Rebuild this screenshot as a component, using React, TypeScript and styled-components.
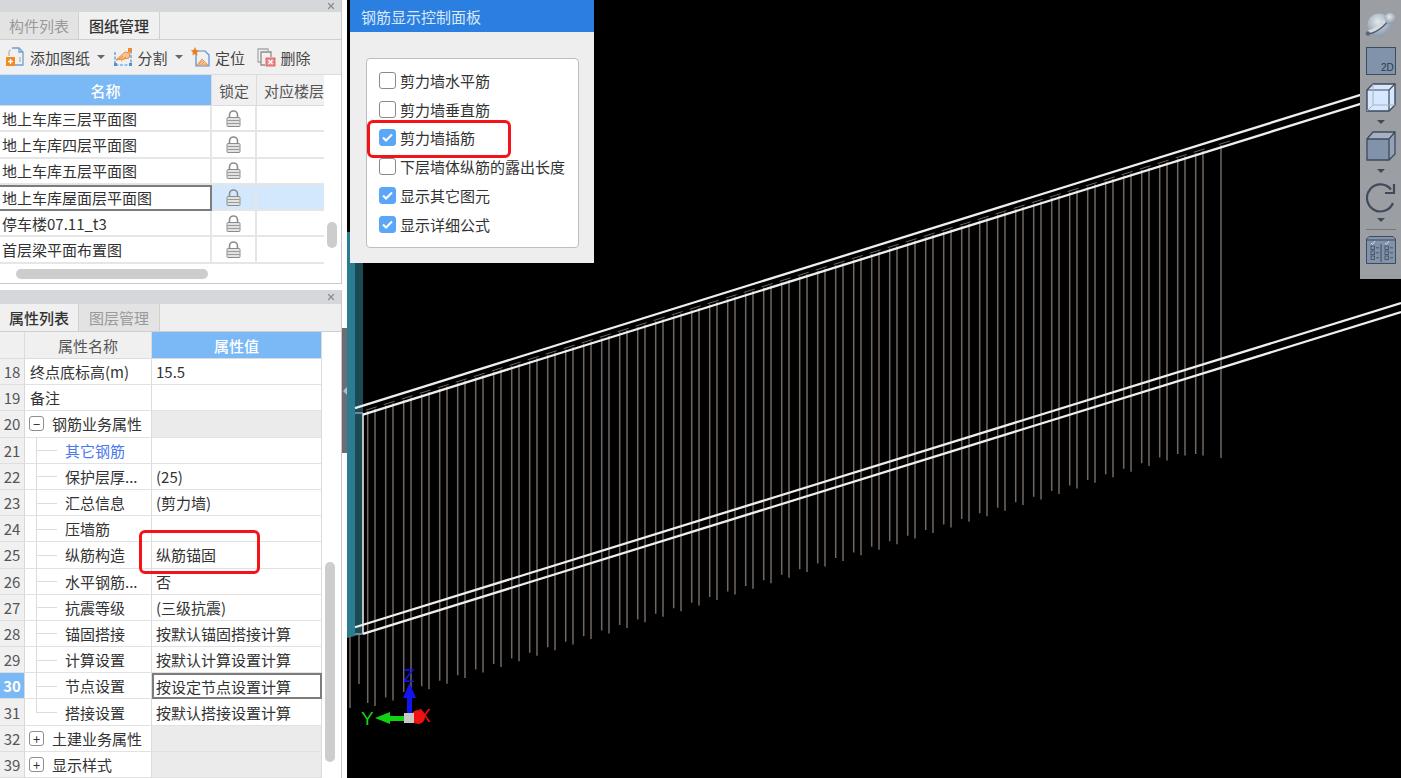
import styled, { createGlobalStyle } from 'styled-components';
import { X } from 'lucide-react';

const GlobalStyle = createGlobalStyle`
  html, body {
    margin: 0;
    height: 100%;
    overflow: hidden;
    background: #000;
    font-family: "Noto Sans CJK SC", "Liberation Sans", sans-serif;
    font-size: 15px;
    color: #333;
  }
`;

const Page = styled.div`
  display: flex;
  width: 1401px;
  height: 778px;
`;

const Sidebar = styled.aside`
  position: relative;
  display: flex;
  flex-direction: column;
  gap: 6px;
  width: 347px;
  height: 778px;
  background: #fff;
  flex-shrink: 0;
`;

const Panel = styled.section<{ $grow?: boolean }>`
  display: flex;
  flex-direction: column;
  width: 342px;
  box-sizing: border-box;
  border-right: 1px solid #c9c9c9;
  overflow: hidden;
  ${(p) => (p.$grow ? 'flex: 1;' : 'height: 284px; border-bottom: 1px solid #c9c9c9;')}
`;

const PanelBand = styled.div<{ $height: number }>`
  display: flex;
  align-items: center;
  justify-content: flex-end;
  height: ${(p) => p.$height}px;
  padding-right: 5px;
  background: #d6d7da;
  color: #8b8c90;
  flex-shrink: 0;
`;

const TabRow = styled.div`
  display: flex;
  height: 28px;
  background: #efefef;
  border-bottom: 1px solid #cfcfcf;
  box-sizing: border-box;
  flex-shrink: 0;
`;

const Tab = styled.div<{ $active?: boolean; $width: number }>`
  display: flex;
  align-items: center;
  justify-content: center;
  width: ${(p) => p.$width}px;
  box-sizing: border-box;
  border-right: 1px solid #d0d0d0;
  background: ${(p) => (p.$active ? '#f0f0f0' : '#e3e3e3')};
  color: ${(p) => (p.$active ? '#333' : '#9a9a9a')};
  font-weight: ${(p) => (p.$active ? 500 : 400)};
`;

const Toolbar = styled.div`
  display: flex;
  align-items: center;
  gap: 7.5px;
  height: 35px;
  padding-left: 5px;
  background: #f0f0f0;
  border-bottom: 1px solid #dcdcdc;
  box-sizing: border-box;
  flex-shrink: 0;
`;

const ToolButton = styled.div<{ $offset?: number }>`
  display: flex;
  align-items: center;
  gap: 5px;
  margin-left: ${(p) => p.$offset ?? 0}px;
  color: #444;
`;

const Caret = styled.span<{ $color?: string; $top?: number }>`
  display: block;
  width: 0;
  height: 0;
  margin-top: ${(p) => p.$top ?? 0}px;
  border-left: 4px solid transparent;
  border-right: 4px solid transparent;
  border-top: 4px solid ${(p) => p.$color ?? '#666'};
  flex-shrink: 0;
`;

const ToolCaret = styled(Caret)`
  margin-left: 2px;
`;

const TableArea = styled.div`
  display: flex;
`;

const DrawingGrid = styled.div`
  display: grid;
  grid-template-columns: 212px 45px 67px;
  grid-auto-rows: 26.3px;
  grid-template-rows: 31px;
  width: 324px;
`;

const HeaderCell = styled.div<{ $accent?: boolean; $clip?: boolean }>`
  display: flex;
  align-items: center;
  justify-content: ${(p) => (p.$clip ? 'flex-start' : 'center')};
  box-sizing: border-box;
  padding-left: ${(p) => (p.$clip ? 7 : 0)}px;
  border-right: ${(p) => (p.$clip ? 'none' : '1px solid #dcdcdc')};
  border-bottom: 1px solid #dcdcdc;
  background: ${(p) => (p.$accent ? '#7ab8f6' : '#f0f0f0')};
  color: ${(p) => (p.$accent ? '#fff' : '#555')};
  font-weight: ${(p) => (p.$accent ? 500 : 400)};
  white-space: nowrap;
  overflow: hidden;
`;

const DrawingCell = styled.div<{ $selected?: boolean; $focus?: boolean; $center?: boolean; $edge?: boolean }>`
  display: flex;
  align-items: center;
  justify-content: ${(p) => (p.$center ? 'center' : 'flex-start')};
  box-sizing: border-box;
  padding-left: ${(p) => (p.$center ? 0 : 2)}px;
  background: ${(p) => (p.$selected && !p.$focus ? '#d3e8fd' : '#fff')};
  border-right: ${(p) => (p.$edge ? 'none' : '2px solid #e6e6e6')};
  border-bottom: 2px solid #e6e6e6;
  white-space: nowrap;
  ${(p) => p.$focus && 'border: 2px solid #7c7c7c; border-left: none; padding-bottom: 2px;'}
`;

const VTrack = styled.div`
  flex: 1;
`;

const VThumb = styled.div<{ $top: number; $height: number }>`
  width: 10px;
  height: ${(p) => p.$height}px;
  margin: ${(p) => p.$top}px 0 0 3px;
  border-radius: 5px;
  background: #cdcdcd;
`;

const HThumb = styled.div`
  width: 192px;
  height: 10px;
  margin: 5px 0 0 16px;
  border-radius: 5px;
  background: #cdcdcd;
`;

const PropertyGrid = styled.div`
  display: grid;
  grid-template-columns: 25px 127px 170px;
  grid-auto-rows: 26.2px;
  grid-template-rows: 27px;
  width: 322px;
`;

const IndexCell = styled.div<{ $active?: boolean }>`
  display: flex;
  align-items: center;
  justify-content: center;
  box-sizing: border-box;
  border-right: 1px solid #d8d8d8;
  border-bottom: 1px solid #dedede;
  background: ${(p) => (p.$active ? '#7ab8f6' : '#f0f0f0')};
  color: ${(p) => (p.$active ? '#fff' : '#555')};
  font-weight: ${(p) => (p.$active ? 700 : 400)};
`;

const NameCell = styled.div<{ $indent: number; $link?: boolean }>`
  position: relative;
  display: flex;
  align-items: center;
  box-sizing: border-box;
  padding-left: ${(p) => p.$indent}px;
  border-right: 1px solid #dcdcdc;
  border-bottom: 1px solid #e2e2e2;
  background: #fff;
  color: ${(p) => (p.$link ? '#4a78ee' : '#333')};
  white-space: nowrap;
`;

const TreeNameCell = styled(NameCell)<{ $last?: boolean }>`
  &::before {
    content: '';
    position: absolute;
    left: 11px;
    top: 50%;
    width: 21px;
    height: 1px;
    background: #dcdcdc;
  }
  &::after {
    content: '';
    position: absolute;
    left: 11px;
    top: 0;
    width: 1px;
    height: ${(p) => (p.$last ? '50%' : '100%')};
    background: #dcdcdc;
  }
`;

const ValueCell = styled.div<{ $group?: boolean; $focus?: boolean }>`
  display: flex;
  align-items: center;
  box-sizing: border-box;
  padding-left: 4px;
  border-right: 1px solid #dcdcdc;
  border-bottom: 1px solid #e2e2e2;
  background: ${(p) => (p.$group ? '#ebebeb' : '#fff')};
  white-space: nowrap;
  ${(p) => p.$focus && 'border: 2px solid #7c7c7c; padding-left: 2px;'}
`;

const Expander = styled.span`
  position: absolute;
  left: 4px;
  top: 5px;
  display: flex;
  align-items: center;
  justify-content: center;
  width: 15px;
  height: 15px;
  box-sizing: border-box;
  border: 1px solid #8f8f8f;
  border-radius: 3px;
  background: #fff;
  color: #333;
  font-size: 13px;
  line-height: 1;
`;

const Splitter = styled.div`
  position: absolute;
  left: 342px;
  top: 328px;
  display: flex;
  align-items: center;
  justify-content: center;
  width: 5px;
  height: 125px;
  background: #6a6d72;
  &::after {
    content: '';
    border-top: 4px solid transparent;
    border-bottom: 4px solid transparent;
    border-right: 4px solid #b9bcc0;
  }
`;

const Highlight = styled.div<{ $left: number; $top: number; $width: number; $height: number }>`
  position: absolute;
  left: ${(p) => p.$left}px;
  top: ${(p) => p.$top}px;
  width: ${(p) => p.$width}px;
  height: ${(p) => p.$height}px;
  box-sizing: border-box;
  border: 3px solid #f5131a;
  border-radius: 6px;
  pointer-events: none;
`;

const Viewport = styled.main`
  position: relative;
  flex: 1;
  height: 778px;
  background: #000;
  overflow: hidden;
`;

const SceneSvg = styled.svg`
  position: absolute;
  inset: 0;
  width: 100%;
  height: 100%;
`;

const FloatPanel = styled.div`
  position: absolute;
  left: 3px;
  top: 0;
  width: 244px;
  height: 263px;
  background: #eeeeee;
`;

const FloatTitle = styled.div`
  display: flex;
  align-items: center;
  height: 32px;
  padding-left: 11px;
  background: #2b7fe0;
  color: #d9e9fb;
`;

const OptionBox = styled.div`
  display: flex;
  flex-direction: column;
  box-sizing: border-box;
  width: 213px;
  height: 190px;
  margin: 26px 0 0 16px;
  padding: 7px 0 0 12px;
  background: #fff;
  border: 1px solid #bdbdbd;
  border-radius: 4px;
`;

const OptionRow = styled.label`
  display: flex;
  align-items: center;
  gap: 4px;
  height: 28.8px;
  flex-shrink: 0;
  white-space: nowrap;
`;

const CheckBox = styled.span<{ $checked?: boolean }>`
  display: flex;
  align-items: center;
  justify-content: center;
  width: 17px;
  height: 17px;
  box-sizing: border-box;
  border-radius: 3px;
  border: 1px solid ${(p) => (p.$checked ? '#5ba6f6' : '#8a8a8a')};
  background: ${(p) => (p.$checked ? '#5ba6f6' : '#fff')};
`;

const Rail = styled.div`
  position: absolute;
  right: 0;
  top: 0;
  display: flex;
  flex-direction: column;
  align-items: center;
  box-sizing: border-box;
  width: 41px;
  height: 279px;
  padding-top: 12px;
  background: #9b9ea3;
`;

const RailIcon = styled.svg<{ $top?: number }>`
  display: block;
  margin-top: ${(p) => p.$top ?? 0}px;
  flex-shrink: 0;
`;

const RailDivider = styled.div`
  width: 30px;
  height: 1px;
  margin-top: 7px;
  background: #7a7674;
  flex-shrink: 0;
`;

const RAIL_LINE = '#3f4a5a';
const RAIL_FILL = '#8093ab';
const BAR_COLOR = '#726861';

const AddIcon = () => (
  <svg width="20" height="20" viewBox="0 0 20 20" fill="none">
    <path d="M7 1h7l4 4v13H10" stroke="#6f9fd4" strokeWidth="1.3" />
    <path d="M14 1v4h4" stroke="#6f9fd4" strokeWidth="1.3" />
    <path d="M4 9V5a2 2 0 0 1 2-2M15 15v-5" stroke="#b0b0b0" strokeWidth="1.2" />
    <rect x="1" y="10" width="9" height="9" fill="#f08a24" />
    <path d="M5.500 12v5M3 14.500h5" stroke="#fff" strokeWidth="1.4" />
  </svg>
);

const SplitIcon = () => (
  <svg width="20" height="20" viewBox="0 0 20 20" fill="none">
    <path d="M2 5v13h16V5" stroke="#4d8fd8" strokeWidth="1.2" strokeDasharray="3 1.500" />
    <path d="M3 13l9-8 5 1-1 5-6 1z" fill="#f5c49a" stroke="#ee8a34" strokeWidth="1" />
    <path d="M6 12l4-3M8 14l5-4" stroke="#ee8a34" strokeWidth="1" />
    <rect x="15" y="1" width="4" height="4" fill="#ee8a34" />
    <rect x="1" y="16" width="3" height="3" fill="#4d8fd8" />
    <rect x="16" y="16" width="3" height="3" fill="#4d8fd8" />
  </svg>
);

const LocateIcon = () => (
  <svg width="20" height="20" viewBox="0 0 20 20" fill="none">
    <path d="M6 6v13h13V8l-4-4H8" stroke="#4d8fd8" strokeWidth="1.2" />
    <path d="M7 18l5-6 6 6z" fill="#f5c49a" stroke="#ee8a34" strokeWidth="0.8" />
    <path d="M9 17l3-3M12 17l2-2" stroke="#ee8a34" strokeWidth="0.8" />
    <path d="M5 0l1.300 3 3 .4-2.300 2 .6 3L5 7 2.400 8.400l.6-3-2.300-2 3-.4z" fill="#ee7d1e" />
  </svg>
);

const DeleteIcon = () => (
  <svg width="20" height="20" viewBox="0 0 20 20" fill="none">
    <path d="M5 15H2V2h10v2" stroke="#a8a8a8" strokeWidth="1.3" />
    <path d="M9 18H5V5h10v5" stroke="#8d8d8d" strokeWidth="1.3" />
    <rect x="10" y="11" width="9" height="8" fill="#ee8c8c" stroke="#d95050" strokeWidth="0.8" />
    <path d="M12.500 13l4 4M16.500 13l-4 4" stroke="#fff" strokeWidth="1.3" />
  </svg>
);

const LockIcon = () => (
  <svg width="15" height="17" viewBox="0 0 15 17" fill="none">
    <path d="M3.500 8V5a4 4 0 0 1 8 0v3" stroke="#8c8c8c" strokeWidth="1.6" />
    <rect x="1" y="7.500" width="13" height="9" rx="1" fill="#e2e2e2" stroke="#8c8c8c" />
    <path d="M1.500 10.500h12M1.500 13.500h12" stroke="#9a9a9a" />
  </svg>
);

const CheckMark = () => (
  <svg width="11" height="9" viewBox="0 0 11 9" fill="none">
    <path d="M1 4.500l3 3 6-6" stroke="#fff" strokeWidth="2" />
  </svg>
);

// beams run along these slopes, all values are page pixels
const upperBeam = (x: number) => 176 - 0.3115 * (x - 1100);
const lowerBeam = (x: number) => 303 - 0.31 * (x - 1401);

type Bar = { x: number; bottom: number };

const bars: Bar[] = [];
for (let n = 0; n <= 47; n++) {
  const a = 367.7 + 18 * n;
  const b = 375 + 18 * n;
  if (n < 47) bars.push({ x: a, bottom: Math.max(703 - 0.31 * (a - 368), 454) });
  bars.push({ x: b, bottom: n === 47 ? 458 : Math.max(706 - 0.31 * (b - 375), 455.500) });
}

const Scene = () => (
  <SceneSvg viewBox="347 0 1054 778">
    <polygon points="347,232 355,232 355,636 347,638" fill="#2a7c90" />
    <polygon points="355,232 363,232 363,634 355,636" fill="#1b4a55" />
    <line x1="350" y1="636" x2="350" y2="708" stroke={BAR_COLOR} strokeWidth="1.500" />
    <line x1="359" y1="634" x2="359" y2="684" stroke={BAR_COLOR} strokeWidth="1.500" />
    {bars.map((bar) => (
      <line
        key={bar.x}
        x1={bar.x}
        y1={upperBeam(bar.x) + 7}
        x2={bar.x}
        y2={bar.bottom}
        stroke={BAR_COLOR}
        strokeWidth="1.500"
      />
    ))}
    {bars
      .filter((_, i) => i % 2 === 0)
      .map((bar) => (
        <line
          key={bar.x}
          x1={bar.x - 2}
          y1={upperBeam(bar.x - 2) + 5.500}
          x2={bar.x + 9}
          y2={upperBeam(bar.x + 9) + 5.500}
          stroke="#6f6662"
          strokeWidth="1"
        />
      ))}
    <line x1="363" y1="413" x2="363" y2="634" stroke="#e6e6e6" strokeWidth="1.600" />
    <line x1="355" y1="413" x2="363" y2="413" stroke="#8fa6ac" strokeWidth="1.400" />
    <line x1="355" y1="634" x2="363" y2="634" stroke="#8fa6ac" strokeWidth="1.400" />
    <line x1="355" y1={upperBeam(355)} x2="1401" y2={upperBeam(1401)} stroke="#eeeeee" strokeWidth="2.300" />
    <line x1="363" y1={upperBeam(363) + 9} x2="1401" y2={upperBeam(1401) + 9} stroke="#eeeeee" strokeWidth="2.300" />
    <line x1="355" y1={lowerBeam(355)} x2="1401" y2={lowerBeam(1401)} stroke="#eeeeee" strokeWidth="2.300" />
    <line x1="363" y1={lowerBeam(363) + 9} x2="1401" y2={lowerBeam(1401) + 9} stroke="#eeeeee" strokeWidth="2.300" />

    <rect x="407" y="694" width="5" height="20" fill="#1414f0" />
    <polygon points="409.500,683 416,698 403,698" fill="#1414f0" />
    <rect x="384" y="716" width="22" height="5" fill="#11d411" />
    <polygon points="375,718 390,712 390,724" fill="#11d411" />
    <circle cx="418" cy="717" r="7" fill="#f01212" />
    <rect x="404" y="713" width="10" height="10" fill="#c9c9c9" />
    <text x="403" y="682" fill="#1414f0" fontFamily="Liberation Sans" fontSize="19">Z</text>
    <text x="361" y="725" fill="#11d411" fontFamily="Liberation Sans" fontSize="19">Y</text>
    <text x="418" y="722" fill="#f01212" fontFamily="Liberation Sans" fontSize="19">X</text>
  </SceneSvg>
);

const SphereIcon = () => (
  <RailIcon width="31" height="25" viewBox="0 0 31 25">
    <defs>
      <radialGradient id="ball" cx="0.450" cy="0.350" r="0.800">
        <stop offset="0" stopColor="#e4e8ec" />
        <stop offset="1" stopColor="#76879d" />
      </radialGradient>
    </defs>
    <circle cx="14" cy="13" r="11.500" fill="url(#ball)" />
    <path d="M3 20C9 19 17 13 22 6" fill="none" stroke="#d5dae0" strokeWidth="3" />
    <path d="M2 22C9 22 20 15 24 7" fill="none" stroke="#4a5666" strokeWidth="1.300" />
    <circle cx="25" cy="6.500" r="5.500" fill="url(#ball)" />
    <circle cx="3" cy="21.500" r="2.200" fill="#5a6676" />
  </RailIcon>
);

const Flat2dIcon = () => (
  <RailIcon $top={10} width="30" height="28" viewBox="0 0 30 28">
    <rect x="0.500" y="0.500" width="29" height="27" fill={RAIL_FILL} stroke={RAIL_LINE} />
    <text x="15" y="24" fill="#2f3a48" fontFamily="Liberation Sans" fontSize="10">2D</text>
  </RailIcon>
);

const GlassCubeIcon = () => (
  <RailIcon $top={8} width="30" height="29" viewBox="0 0 30 29">
    <path d="M1 7L7 1H29V22L23 28H1Z" fill="#d6e8ff" stroke={RAIL_LINE} strokeWidth="1.400" />
    <path d="M1 7H23V28M23 7L29 1" fill="none" stroke={RAIL_LINE} strokeWidth="1.200" />
    <path d="M7 1V22H29M7 22L1 28" fill="none" stroke="#a3b0c2" strokeWidth="1" />
  </RailIcon>
);

const SolidCubeIcon = () => (
  <RailIcon $top={7} width="30" height="30" viewBox="0 0 30 30">
    <path d="M1 8L7 1H29L23 8Z" fill="#a4b1c3" />
    <path d="M23 8L29 1V23L23 29Z" fill="#93a2b7" />
    <rect x="1" y="8" width="22" height="21" fill={RAIL_FILL} />
    <path d="M1 8L7 1H29V23L23 29H1ZM1 8H23V29M23 8L29 1" fill="none" stroke={RAIL_LINE} strokeWidth="1.300" />
  </RailIcon>
);

const RotateIcon = () => (
  <RailIcon $top={9} width="30" height="31" viewBox="0 0 30 31" fill="none">
    <path d="M27 21A13.500 13.500 0 1 1 25 7.500" stroke={RAIL_LINE} strokeWidth="2.200" />
    <path d="M28 2V11H19" stroke={RAIL_LINE} strokeWidth="2.200" />
  </RailIcon>
);

const ChecklistIcon = () => (
  <RailIcon $top={6} width="30" height="28" viewBox="0 0 30 28" fill="none">
    <path d="M0.500 3L3 0.500H27L29.500 3V27.500H0.500Z" fill={RAIL_FILL} stroke={RAIL_LINE} />
    <path d="M1 4H29M15 8V26" stroke={RAIL_LINE} />
    <path d="M5 7l1.500 1.500L9 5M19 7l1.500 1.500L23 5" stroke="#e8edf3" strokeWidth="0.800" />
    {[5, 19].map((x) =>
      [10, 15, 20].map((y) => (
        <g key={`${x}-${y}`}>
          <rect x={x} y={y} width="3.500" height="3.500" stroke={RAIL_LINE} strokeWidth="0.800" />
          <path d={`M${x + 5} ${y + 1.800}h3`} stroke={RAIL_LINE} strokeWidth="0.800" />
        </g>
      )),
    )}
  </RailIcon>
);

const drawings = [
  { name: '地上车库三层平面图' },
  { name: '地上车库四层平面图' },
  { name: '地上车库五层平面图' },
  { name: '地上车库屋面层平面图', selected: true },
  { name: '停车楼07.11_t3' },
  { name: '首层梁平面布置图' },
];

type Prop = {
  n: number;
  name: string;
  value?: string;
  kind: 'plain' | 'group' | 'child';
  open?: boolean;
  link?: boolean;
  last?: boolean;
  active?: boolean;
};

const properties: Prop[] = [
  { n: 18, name: '终点底标高(m)', value: '15.5', kind: 'plain' },
  { n: 19, name: '备注', kind: 'plain' },
  { n: 20, name: '钢筋业务属性', kind: 'group', open: true },
  { n: 21, name: '其它钢筋', kind: 'child', link: true },
  { n: 22, name: '保护层厚...', value: '(25)', kind: 'child' },
  { n: 23, name: '汇总信息', value: '(剪力墙)', kind: 'child' },
  { n: 24, name: '压墙筋', kind: 'child' },
  { n: 25, name: '纵筋构造', value: '纵筋锚固', kind: 'child' },
  { n: 26, name: '水平钢筋...', value: '否', kind: 'child' },
  { n: 27, name: '抗震等级', value: '(三级抗震)', kind: 'child' },
  { n: 28, name: '锚固搭接', value: '按默认锚固搭接计算', kind: 'child' },
  { n: 29, name: '计算设置', value: '按默认计算设置计算', kind: 'child' },
  { n: 30, name: '节点设置', value: '按设定节点设置计算', kind: 'child', active: true },
  { n: 31, name: '搭接设置', value: '按默认搭接设置计算', kind: 'child', last: true },
  { n: 32, name: '土建业务属性', kind: 'group' },
  { n: 39, name: '显示样式', kind: 'group' },
];

const options = [
  { label: '剪力墙水平筋' },
  { label: '剪力墙垂直筋' },
  { label: '剪力墙插筋', checked: true },
  { label: '下层墙体纵筋的露出长度' },
  { label: '显示其它图元', checked: true },
  { label: '显示详细公式', checked: true },
];

function PropertyName({ prop }: { prop: Prop }) {
  if (prop.kind === 'child') {
    return (
      <TreeNameCell $indent={40} $link={prop.link} $last={prop.last}>
        {prop.name}
      </TreeNameCell>
    );
  }
  if (prop.kind === 'group') {
    return (
      <NameCell $indent={27}>
        <Expander>{prop.open ? '−' : '+'}</Expander>
        {prop.name}
      </NameCell>
    );
  }
  return <NameCell $indent={5}>{prop.name}</NameCell>;
}

export default function App() {
  return (
    <Page>
      <GlobalStyle />
      <Sidebar>
        <Panel>
          <PanelBand $height={12}>
            <X size={10} strokeWidth={3} />
          </PanelBand>
          <TabRow>
            <Tab $width={79}>构件列表</Tab>
            <Tab $width={81} $active>
              图纸管理
            </Tab>
          </TabRow>
          <Toolbar>
            <ToolButton>
              <AddIcon />
              添加图纸
              <ToolCaret />
            </ToolButton>
            <ToolButton>
              <SplitIcon />
              分割
              <ToolCaret />
            </ToolButton>
            <ToolButton>
              <LocateIcon />
              定位
            </ToolButton>
            <ToolButton $offset={3}>
              <DeleteIcon />
              删除
            </ToolButton>
          </Toolbar>
          <TableArea>
            <DrawingGrid>
              <HeaderCell $accent>名称</HeaderCell>
              <HeaderCell>锁定</HeaderCell>
              <HeaderCell $clip>对应楼层</HeaderCell>
              {drawings.map((d) => [
                <DrawingCell key={`${d.name}-n`} $selected={d.selected} $focus={d.selected}>
                  {d.name}
                </DrawingCell>,
                <DrawingCell key={`${d.name}-l`} $selected={d.selected} $center>
                  <LockIcon />
                </DrawingCell>,
                <DrawingCell key={`${d.name}-f`} $selected={d.selected} $edge />,
              ])}
            </DrawingGrid>
            <VTrack>
              <VThumb $top={147} $height={26} />
            </VTrack>
          </TableArea>
          <HThumb />
        </Panel>
        <Panel $grow>
          <PanelBand $height={14}>
            <X size={10} strokeWidth={3} />
          </PanelBand>
          <TabRow>
            <Tab $width={79} $active>
              属性列表
            </Tab>
            <Tab $width={81}>图层管理</Tab>
          </TabRow>
          <TableArea>
            <PropertyGrid>
              <HeaderCell />
              <HeaderCell>属性名称</HeaderCell>
              <HeaderCell $accent>属性值</HeaderCell>
              {properties.map((prop) => [
                <IndexCell key={`${prop.n}-i`} $active={prop.active}>
                  {prop.n}
                </IndexCell>,
                <PropertyName key={`${prop.n}-n`} prop={prop} />,
                <ValueCell key={`${prop.n}-v`} $group={prop.kind === 'group'} $focus={prop.active}>
                  {prop.value}
                </ValueCell>,
              ])}
            </PropertyGrid>
            <VTrack>
              <VThumb $top={230} $height={200} />
            </VTrack>
          </TableArea>
        </Panel>
        <Splitter />
        <Highlight $left={139} $top={530} $width={121} $height={44} />
      </Sidebar>
      <Viewport>
        <Scene />
        <FloatPanel>
          <FloatTitle>钢筋显示控制面板</FloatTitle>
          <OptionBox>
            {options.map((o) => (
              <OptionRow key={o.label}>
                <CheckBox $checked={o.checked}>{o.checked && <CheckMark />}</CheckBox>
                {o.label}
              </OptionRow>
            ))}
          </OptionBox>
          <Highlight $left={17} $top={120} $width={144} $height={38} />
        </FloatPanel>
        <Rail>
          <SphereIcon />
          <Flat2dIcon />
          <GlassCubeIcon />
          <Caret $color={RAIL_LINE} $top={8} />
          <SolidCubeIcon />
          <Caret $color={RAIL_LINE} $top={8} />
          <RotateIcon />
          <Caret $color={RAIL_LINE} $top={5} />
          <RailDivider />
          <ChecklistIcon />
        </Rail>
      </Viewport>
    </Page>
  );
}
